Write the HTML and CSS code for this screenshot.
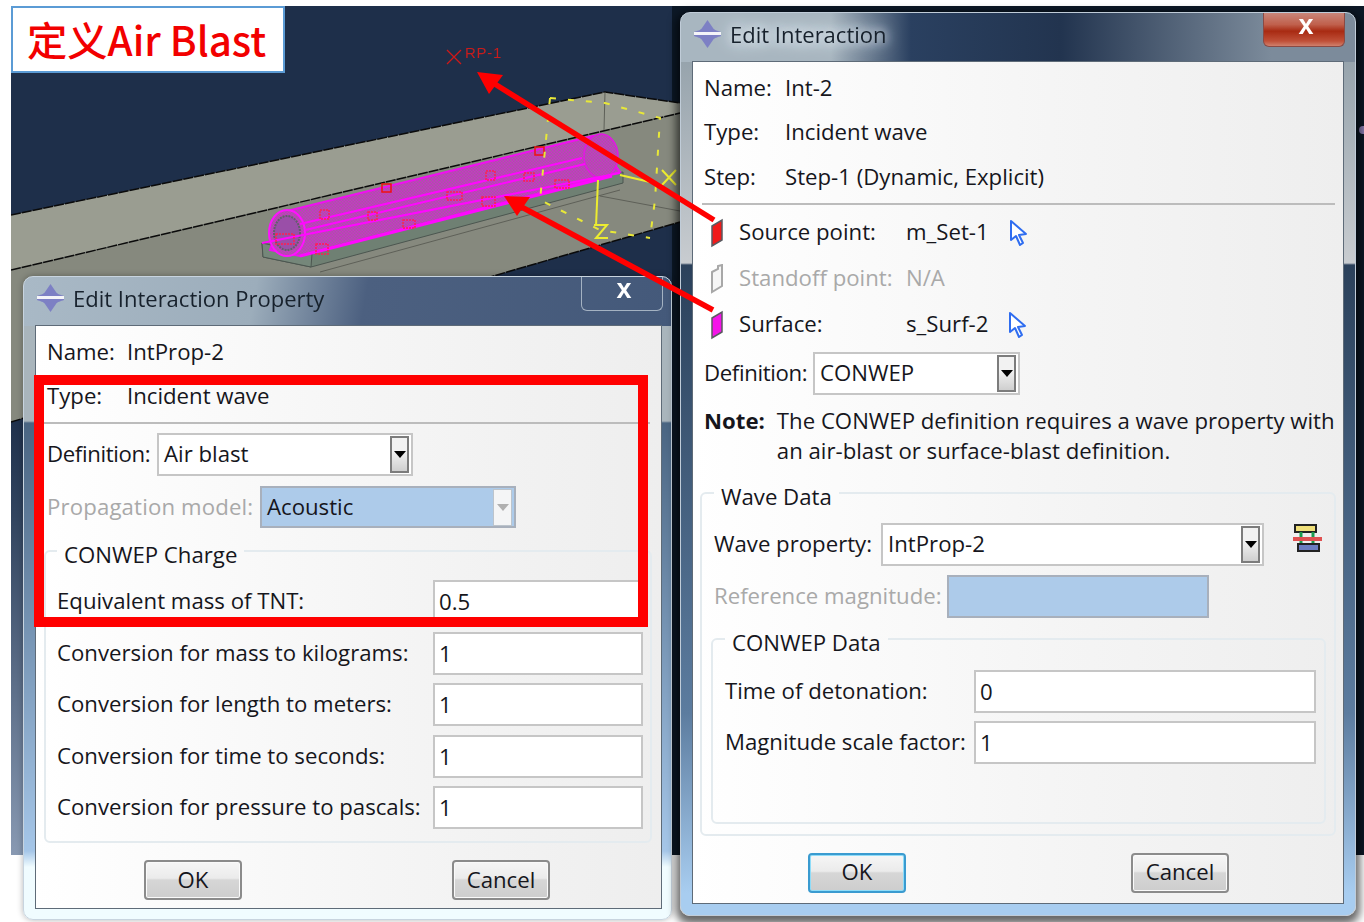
FILE: index.html
```html
<!DOCTYPE html>
<html lang="en">
<head>
<meta charset="utf-8">
<title>定义Air Blast</title>
<link rel="stylesheet" href="styles.css">
</head>
<body>
<main class="stage">
  <div class="scene">
    <svg class="scene-art" width="1353" height="849" viewBox="11 6 1353 849">
      <defs>
        <pattern id="hatch" width="3" height="3" patternUnits="userSpaceOnUse">
          <rect class="hatch-bg" width="3" height="3"/>
          <rect class="hatch-dot" width="1.500" height="1.500"/>
          <rect class="hatch-dot" x="1.500" y="1.500" width="1.500" height="1.500"/>
        </pattern>
      </defs>
      <polygon class="face-top" points="11,215 605,92 680,103 680,113 11,270"/>
      <polygon class="face-front" points="11,270 680,113 680,222 507,272 11,422"/>
      <polyline class="edge" points="11,215 605,92 680,103"/>
      <polyline class="edge" points="11,270 680,113"/>
      <polyline class="edge" points="11,422 507,272 680,222"/>
      <line class="edge-thin" x1="605" y1="92" x2="604" y2="130"/>
      <polyline class="edge-thin" points="600,196 680,211"/>
      <polyline class="edge-thin" points="320,272 620,190"/>
      <polygon class="plate" points="262,243 263,257 311,267 623,183 623,172"/>
      <polygon class="plate-edge" points="262,243 263,257 311,267 312,254"/>
      <polygon class="tube" points="283,212 593,136 620,172 300,256 270,250"/>
      <ellipse class="tube-end" cx="287" cy="233" rx="18" ry="23"/>
      <ellipse class="tube-hole" cx="287" cy="233" rx="13" ry="17"/>
      <ellipse class="tube-far" cx="601" cy="156" rx="17" ry="22"/>
      <polyline class="tube-line" points="262,243 620,173"/>
      <polyline class="tube-line" points="300,224 582,158"/>
      <polyline class="tube-line" points="305,230 585,164"/>
      <polyline class="tube-line-thin" points="300,256 612,176"/>
      <g class="dots">
        <rect x="320" y="210" width="9" height="9"/>
        <rect x="368" y="212" width="9" height="8"/>
        <rect x="403" y="220" width="12" height="8"/>
        <rect x="482" y="197" width="13" height="9"/>
        <rect x="447" y="192" width="15" height="8"/>
        <rect x="486" y="171" width="9" height="9"/>
        <rect x="524" y="173" width="10" height="8"/>
        <rect x="555" y="180" width="14" height="8"/>
        <rect x="276" y="234" width="18" height="10"/>
        <rect x="316" y="244" width="12" height="10"/>
      </g>
      <rect class="red-square" x="382" y="184" width="9" height="8"/>
      <rect class="red-square" x="535" y="147" width="9" height="8"/>
      <polyline class="yellow-dash" points="550,98 605,103 660,118 655,200 650,238"/>
      <polyline class="yellow-dash" points="550,98 545,150 540,200 600,230 650,238"/>
      <polyline class="yellow" points="598,180 596,226"/>
      <polyline class="yellow" points="620,175 650,182"/>
      <path class="yellow" d="M662 170 L676 185 M676 170 L662 185"/>
      <path class="yellow" d="M594 225 H607 L596 238 H608"/>
      <path class="rp-mark" d="M447 50 L461 64 M461 50 L447 64"/>
      <text class="rp-label" x="465" y="58">RP-1</text>
      <circle class="blob" cx="1363" cy="130" r="4"/>
    </svg>
  </div>

  <h1 class="caption">定义Air Blast</h1>

  <section class="window window-left">
    <header class="titlebar">
      <svg class="app-icon" width="27" height="28" viewBox="0 0 27 28"><path class="app-icon-fill" d="M13.500 0 L19 8 C20 10 24 11 27 12 V16 C24 17 20 18 19 20 L13.500 28 L8 20 C7 18 3 17 0 16 V12 C3 11 7 10 8 8 Z"/><rect class="app-icon-bar" x="0" y="12" width="27" height="3"/></svg>
      <span class="title-text">Edit Interaction Property</span>
      <span class="close-btn close-idle">x</span>
    </header>
    <div class="client client-left">
      <div class="info"><span class="info-label w80">Name:</span><span>IntProp-2</span></div>
      <div class="info"><span class="info-label w80">Type:</span><span>Incident wave</span></div>
      <hr class="sep sep-left">
      <div class="field def-left"><span class="lab-def">Definition:</span>
        <div class="combo combo-air"><span class="combo-value">Air blast</span><span class="combo-btn"><i class="tri"></i></span></div>
      </div>
      <div class="field prop-left"><span class="muted lab-prop">Propagation model:</span>
        <div class="combo combo-prop combo-off"><span class="combo-value">Acoustic</span><span class="combo-btn"><i class="tri"></i></span></div>
      </div>
      <fieldset class="group group-charge">
        <legend>CONWEP Charge</legend>
        <div class="form-row"><span>Equivalent mass of TNT:</span><span class="input">0.5</span></div>
        <div class="form-row"><span>Conversion for mass to kilograms:</span><span class="input">1</span></div>
        <div class="form-row"><span>Conversion for length to meters:</span><span class="input">1</span></div>
        <div class="form-row"><span>Conversion for time to seconds:</span><span class="input">1</span></div>
        <div class="form-row"><span>Conversion for pressure to pascals:</span><span class="input">1</span></div>
      </fieldset>
      <div class="actions actions-left">
        <button class="btn" type="button">OK</button>
        <button class="btn" type="button">Cancel</button>
      </div>
    </div>
  </section>

  <section class="window window-right">
    <header class="titlebar">
      <svg class="app-icon" width="27" height="28" viewBox="0 0 27 28"><path class="app-icon-fill" d="M13.500 0 L19 8 C20 10 24 11 27 12 V16 C24 17 20 18 19 20 L13.500 28 L8 20 C7 18 3 17 0 16 V12 C3 11 7 10 8 8 Z"/><rect class="app-icon-bar" x="0" y="12" width="27" height="3"/></svg>
      <span class="title-text glow">Edit Interaction</span>
      <span class="close-btn close-red">x</span>
    </header>
    <div class="client client-right">
      <div class="info"><span class="info-label w81">Name:</span><span>Int-2</span></div>
      <div class="info"><span class="info-label w81">Type:</span><span>Incident wave</span></div>
      <div class="info"><span class="info-label w81">Step:</span><span>Step-1 (Dynamic, Explicit)</span></div>
      <hr class="sep sep-right">
      <div class="pick">
        <svg class="prism" width="16" height="30" viewBox="0 0 16 30"><path class="prism-red" d="M3 8 L13 2 V22 L3 28 Z"/></svg>
        <span class="pick-label">Source point:</span><span class="pick-value">m_Set-1</span>
        <svg class="cursor" width="20" height="28" viewBox="0 0 20 28"><path d="M2 2 V21 L7 17 L11 26 L14 24 L10 16 L17 15 Z"/></svg>
      </div>
      <div class="pick">
        <svg class="prism" width="16" height="30" viewBox="0 0 16 30"><path class="prism-off" d="M3 8 L9 5 V2 L13 1 V22 L3 28 Z"/></svg>
        <span class="pick-label muted">Standoff point:</span><span class="pick-value muted">N/A</span>
      </div>
      <div class="pick">
        <svg class="prism" width="16" height="30" viewBox="0 0 16 30"><path class="prism-pink" d="M3 8 L13 2 V22 L3 28 Z"/></svg>
        <span class="pick-label">Surface:</span><span class="pick-value">s_Surf-2</span>
        <svg class="cursor" width="20" height="28" viewBox="0 0 20 28"><path d="M2 2 V21 L7 17 L11 26 L14 24 L10 16 L17 15 Z"/></svg>
      </div>
      <div class="field def-right"><span class="lab-def-r">Definition:</span>
        <div class="combo combo-conwep"><span class="combo-value">CONWEP</span><span class="combo-btn"><i class="tri"></i></span></div>
      </div>
      <div class="note"><b>Note:</b><p>The CONWEP definition requires a wave property with<br>an air-blast or surface-blast definition.</p></div>
      <fieldset class="group group-wave">
        <legend>Wave Data</legend>
        <div class="field wave-row"><span class="lab-wave">Wave property:</span>
          <div class="combo combo-wave"><span class="combo-value">IntProp-2</span><span class="combo-btn"><i class="tri"></i></span></div>
          <svg class="wave-icon" width="32" height="32" viewBox="0 0 32 32">
            <rect class="wi-top" x="4" y="2" width="21" height="7"/>
            <path class="wi-arrow" d="M10 9 V22 M22 9 V22"/>
            <rect class="wi-mid" x="2" y="14" width="29" height="4"/>
            <rect class="wi-bot" x="7" y="21" width="21" height="7"/>
          </svg>
        </div>
        <div class="field ref-row"><span class="muted lab-ref">Reference magnitude:</span><span class="input input-off"></span></div>
        <fieldset class="group group-data">
          <legend>CONWEP Data</legend>
          <div class="form-row"><span>Time of detonation:</span><span class="input input-data">0</span></div>
          <div class="form-row"><span>Magnitude scale factor:</span><span class="input input-data">1</span></div>
        </fieldset>
      </fieldset>
      <div class="actions actions-right">
        <button class="btn btn-focus" type="button">OK</button>
        <button class="btn" type="button">Cancel</button>
      </div>
    </div>
  </section>

  <div class="callout"></div>
  <svg class="arrows" width="1364" height="922" viewBox="0 0 1364 922">
    <line x1="714" y1="220" x2="490" y2="81"/>
    <polygon points="477,72 503,75 489,94"/>
    <line x1="713" y1="310" x2="516" y2="204"/>
    <polygon points="504,196 530,197 517,216"/>
  </svg>
</main>
</body>
</html>
```
FILE: styles.css
```css
* { box-sizing: border-box; }
html, body { margin: 0; background: #fff; }
.stage {
  position: relative;
  width: 1364px;
  height: 922px;
  overflow: hidden;
  font: 22.200px/1.2 "Open Sans", "Noto Sans", sans-serif;
  color: #16161c;
}
.scene {
  position: absolute;
  left: 11px;
  top: 6px;
  width: 1353px;
  height: 849px;
  background:
    linear-gradient(90deg, transparent 661px, #0c1826 661px),
    linear-gradient(#1e2f4a 0, #1e2f4a 48%, #31445f 60%, #8899b2 100%);
  filter: blur(0.5px);
}
.scene-art { display: block; }
.blob { fill: #8a7cb0; }
.hatch-bg { fill: #a4609f; }
.hatch-dot { fill: #cf2ace; }
.face-top { fill: #9a9d91; }
.face-front { fill: #86897e; }
.edge { fill: none; stroke: #0a0a0a; stroke-width: 1.500; stroke-dasharray: 10 1; }
.edge-thin { fill: none; stroke: #5e6058; stroke-width: 1; }
.plate { fill: #6f8073; stroke: #4c5650; stroke-width: 1; }
.plate-edge { fill: #75877a; stroke: #4c5650; stroke-width: 1; }
.tube { fill: url(#hatch); stroke: #f010f0; stroke-width: 2; }
.tube-end { fill: url(#hatch); stroke: #ff12ff; stroke-width: 2; }
.tube-hole { fill: #9a4fa8; stroke: #60606a; stroke-width: 2; stroke-dasharray: 2 1; }
.tube-far { fill: url(#hatch); stroke: #e218e2; stroke-width: 1.500; }
.tube-line { fill: none; stroke: #ff08ff; stroke-width: 2; }
.tube-line-thin { fill: none; stroke: #ff08ff; stroke-width: 3; }
.dots rect { fill: none; stroke: #ff1f50; stroke-width: 1.500; stroke-dasharray: 2 1; }
.red-square { fill: none; stroke: #f01010; stroke-width: 1.500; }
.yellow-dash { fill: none; stroke: #e8e838; stroke-width: 2; stroke-dasharray: 6 12; }
.yellow { fill: none; stroke: #ecec30; stroke-width: 2; }
.rp-mark { fill: none; stroke: #d01818; stroke-width: 1.300; }
.rp-label { fill: #c81c1c; font: 15px "Liberation Sans", sans-serif; letter-spacing: .7px; }

.caption {
  position: absolute;
  left: 11px;
  top: 6px;
  width: 274px;
  height: 67px;
  margin: 0;
  background: #fff;
  border: 2px solid #5b9bd5;
  color: #f20000;
  font: 500 40.300px/62px "Noto Sans CJK SC", "Noto Sans", sans-serif;
  padding-left: 14px;
  white-space: nowrap;
}

.window {
  position: absolute;
  display: flex;
  flex-direction: column;
  border-radius: 10px;
  filter: blur(0.4px);
}
.window-left {
  left: 23px;
  top: 276px;
  width: 649px;
  height: 644px;
  padding: 0 9px 10px 11px;
  border: 1px solid #c8d4df;
  background:
    linear-gradient(100deg, #a9b9c6 0, #9cadbb 230px, #4c6080 340px, #44597a 100%) 0 0 / 100% 49px no-repeat,
    linear-gradient(#a9b5bc 0, #a9b5bc 144px, #4a6582 146px, #a5c6e8 574px, #f0fcff 590px, #f0fcff 100%);
  box-shadow: 0 0 6px rgba(0, 0, 0, .3);
}
.window-right {
  left: 680px;
  top: 12px;
  width: 676px;
  height: 904px;
  padding: 0 11px 11px 11px;
  border: 1px solid #c0ccd8;
  background:
    linear-gradient(90deg, #a8b6c0 0, #a8b6c0 150px, #2a4060 230px, #22344f 380px, #7c8b9b 590px, #7c8b9b 100%) 0 0 / 100% 49px no-repeat,
    linear-gradient(#8b9aa4 0, #c8ccd0 250px, #2b415b 252px, #5c7c9f 700px, #a8cdf0 880px, #a8cdf0 100%);
  box-shadow: 0 4px 8px 4px rgba(0, 0, 0, .6);
}
.titlebar {
  position: relative;
  display: flex;
  align-items: center;
  flex: none;
  height: 48px;
  gap: 9px;
  padding: 0 0 6px 2px;
  font-size: 22px;
}
.app-icon { flex: none; }
.app-icon-fill { fill: #7d80c4; }
.app-icon-bar { fill: #f4f4f8; }
.title-text { color: #17212c; white-space: nowrap; }
.glow { text-shadow: 0 0 8px #dfe7ee, 0 0 14px #dfe7ee, 0 0 20px #dfe7ee; }
.close-btn {
  position: absolute;
  top: 0;
  right: -1px;
  height: 34px;
  width: 82px;
  padding-left: 4px;
  text-align: center;
  color: #fff;
  font: bold 27px/24px "Liberation Sans", sans-serif;
  border: 1px solid #a4b2c2;
  border-top: 0;
  border-radius: 0 0 6px 6px;
}
.close-red {
  background: linear-gradient(#c9867a 0, #c0604c 35%, #a82a12 55%, #c05038 85%, #d0806c 100%);
  border-color: #8a4a44;
}
.client {
  flex: 1;
  min-height: 0;
  border: 1px solid #5e6b78;
  background: linear-gradient(90deg, #fff 0, #f5f5f5 55%, #eeeeee 100%);
}
.client-left { padding: 4px 9px 0 11px; }
.client-right { padding: 4px 9px 0 11px; }
.info { display: flex; align-items: center; height: 44.500px; white-space: nowrap; }
.info-label { flex: none; }
.w80 { width: 80px; }
.w81 { width: 81px; }
.sep { border: 0; height: 2px; background: #bcbcbc; margin: 0; }
.sep-left { margin: 3px 2px 0 -3px; }
.sep-right { margin: 3px -1px 5px -2px; }
.muted { color: #a9a9a9; }
.field { display: flex; align-items: center; white-space: nowrap; }
.def-left { margin-top: 9px; }
.prop-left { margin-top: 10px; }
.def-right { margin-top: 4px; }
.lab-def { flex: none; width: 110px; letter-spacing: -.35px; }
.lab-prop { flex: none; width: 213px; letter-spacing: .15px; }
.lab-def-r { flex: none; width: 109px; letter-spacing: -.35px; }
.lab-wave { flex: none; width: 167px; }
.lab-ref { flex: none; width: 233px; }
.combo {
  display: flex;
  align-items: center;
  justify-content: space-between;
  flex: none;
  height: 43px;
  padding: 0 2px 0 5px;
  background: #fff;
  border: 2px solid #c6c6c6;
}
.combo-air { width: 256px; }
.combo-prop { width: 256px; height: 42px; }
.combo-conwep { width: 207px; }
.combo-wave { width: 383px; }
.combo-off { background: #adcbea; border-color: #a8b0bc; }
.combo-btn {
  display: flex;
  align-items: center;
  justify-content: center;
  width: 19px;
  height: 37px;
  background: linear-gradient(#f2f2f2 0, #f2f2f2 40%, #cfcfcf 100%);
  border: 2px solid #7c7c7c;
}
.combo-off .combo-btn { background: #f4f5f6; border: 1px solid #bcc4cc; }
.tri {
  display: block;
  width: 0;
  height: 0;
  border: 6px solid transparent;
  border-top: 7px solid #000;
  border-bottom: 0;
}
.combo-off .tri { border-top-color: #b0b0b0; }
.group {
  min-width: 0;
  margin: 0;
  border: 2px solid #e4ebef;
  border-radius: 6px;
}
.group legend {
  margin-left: 0;
  padding: 8px 7px 0 7px;
  line-height: 24px;
  white-space: nowrap;
}
.group-charge { margin: 7px 0 0 -3px; height: 308px; padding: 13px 7px 0 11px; }
.form-row {
  display: flex;
  align-items: center;
  justify-content: space-between;
  height: 43px;
  margin-bottom: 8.500px;
  white-space: nowrap;
}
.input {
  display: block;
  flex: none;
  width: 210px;
  height: 43px;
  padding-left: 4px;
  line-height: 40px;
  background: #fff;
  border: 2px solid #c6c6c6;
}
.input-data { width: 342px; }
.input-off { width: 262px; background: #adcbea; border-color: #a8b0bc; }
.actions { display: flex; }
.btn {
  width: 98px;
  height: 40px;
  padding: 0;
  font: inherit;
  color: #16161c;
  border: 2px solid #8b8b8b;
  border-radius: 4px;
  background: linear-gradient(#f6f6f6 0, #ebebeb 45%, #d6d6d6 50%, #cdcdcd 100%);
  box-shadow: inset 0 0 0 1px #fafafa;
}
.btn-focus { border-color: #3a9bd0; box-shadow: inset 0 0 0 1px #8fdcf8; }
.actions-left { margin: 17px 0 0 97px; gap: 210px; }
.actions-right { margin: 17px 0 0 104px; gap: 225px; }

.pick { display: flex; align-items: center; height: 46px; white-space: nowrap; }
.prism { flex: none; margin: 0 14px 0 5px; }
.prism-red { fill: #f01a1a; stroke: #5a5a60; stroke-width: 1.500; }
.prism-off { fill: #f6f6f6; stroke: #a8a8a8; stroke-width: 2; }
.prism-pink { fill: #f414e8; stroke: #5a5a60; stroke-width: 1.500; }
.pick-label { width: 167px; flex: none; }
.cursor { margin-left: 20px; flex: none; }
.cursor path { fill: #fff; stroke: #2f6df0; stroke-width: 2; stroke-linejoin: round; }
.note { display: flex; margin-top: 11px; gap: 12px; line-height: 30px; white-space: nowrap; }
.note b { flex: none; }
.note p { margin: 0; }
.group-wave { margin: 11px -2px 0 -4px; height: 359px; padding: 14px 9px 0 12px; }
.wave-icon { flex: none; margin: 0 0 10px 27px; }
.wi-top { fill: #f0e07a; stroke: #222; stroke-width: 2; }
.wi-bot { fill: #6b7cc0; stroke: #222; stroke-width: 2; }
.wi-mid { fill: #e05050; }
.wi-arrow { stroke: #1c9c50; stroke-width: 3; fill: none; }
.ref-row { margin-top: 9px; }
.group-data { margin: 5px -1px 0 -3px; height: 201px; padding: 15px 8px 0 12px; }

.callout {
  position: absolute;
  left: 34px;
  top: 375px;
  width: 614px;
  height: 252px;
  border: 10.500px solid #ff0000;
}
.arrows { position: absolute; left: 0; top: 0; pointer-events: none; }
.arrows line { stroke: #ff0000; stroke-width: 5.500; }
.arrows polygon { fill: #ff0000; }
```
